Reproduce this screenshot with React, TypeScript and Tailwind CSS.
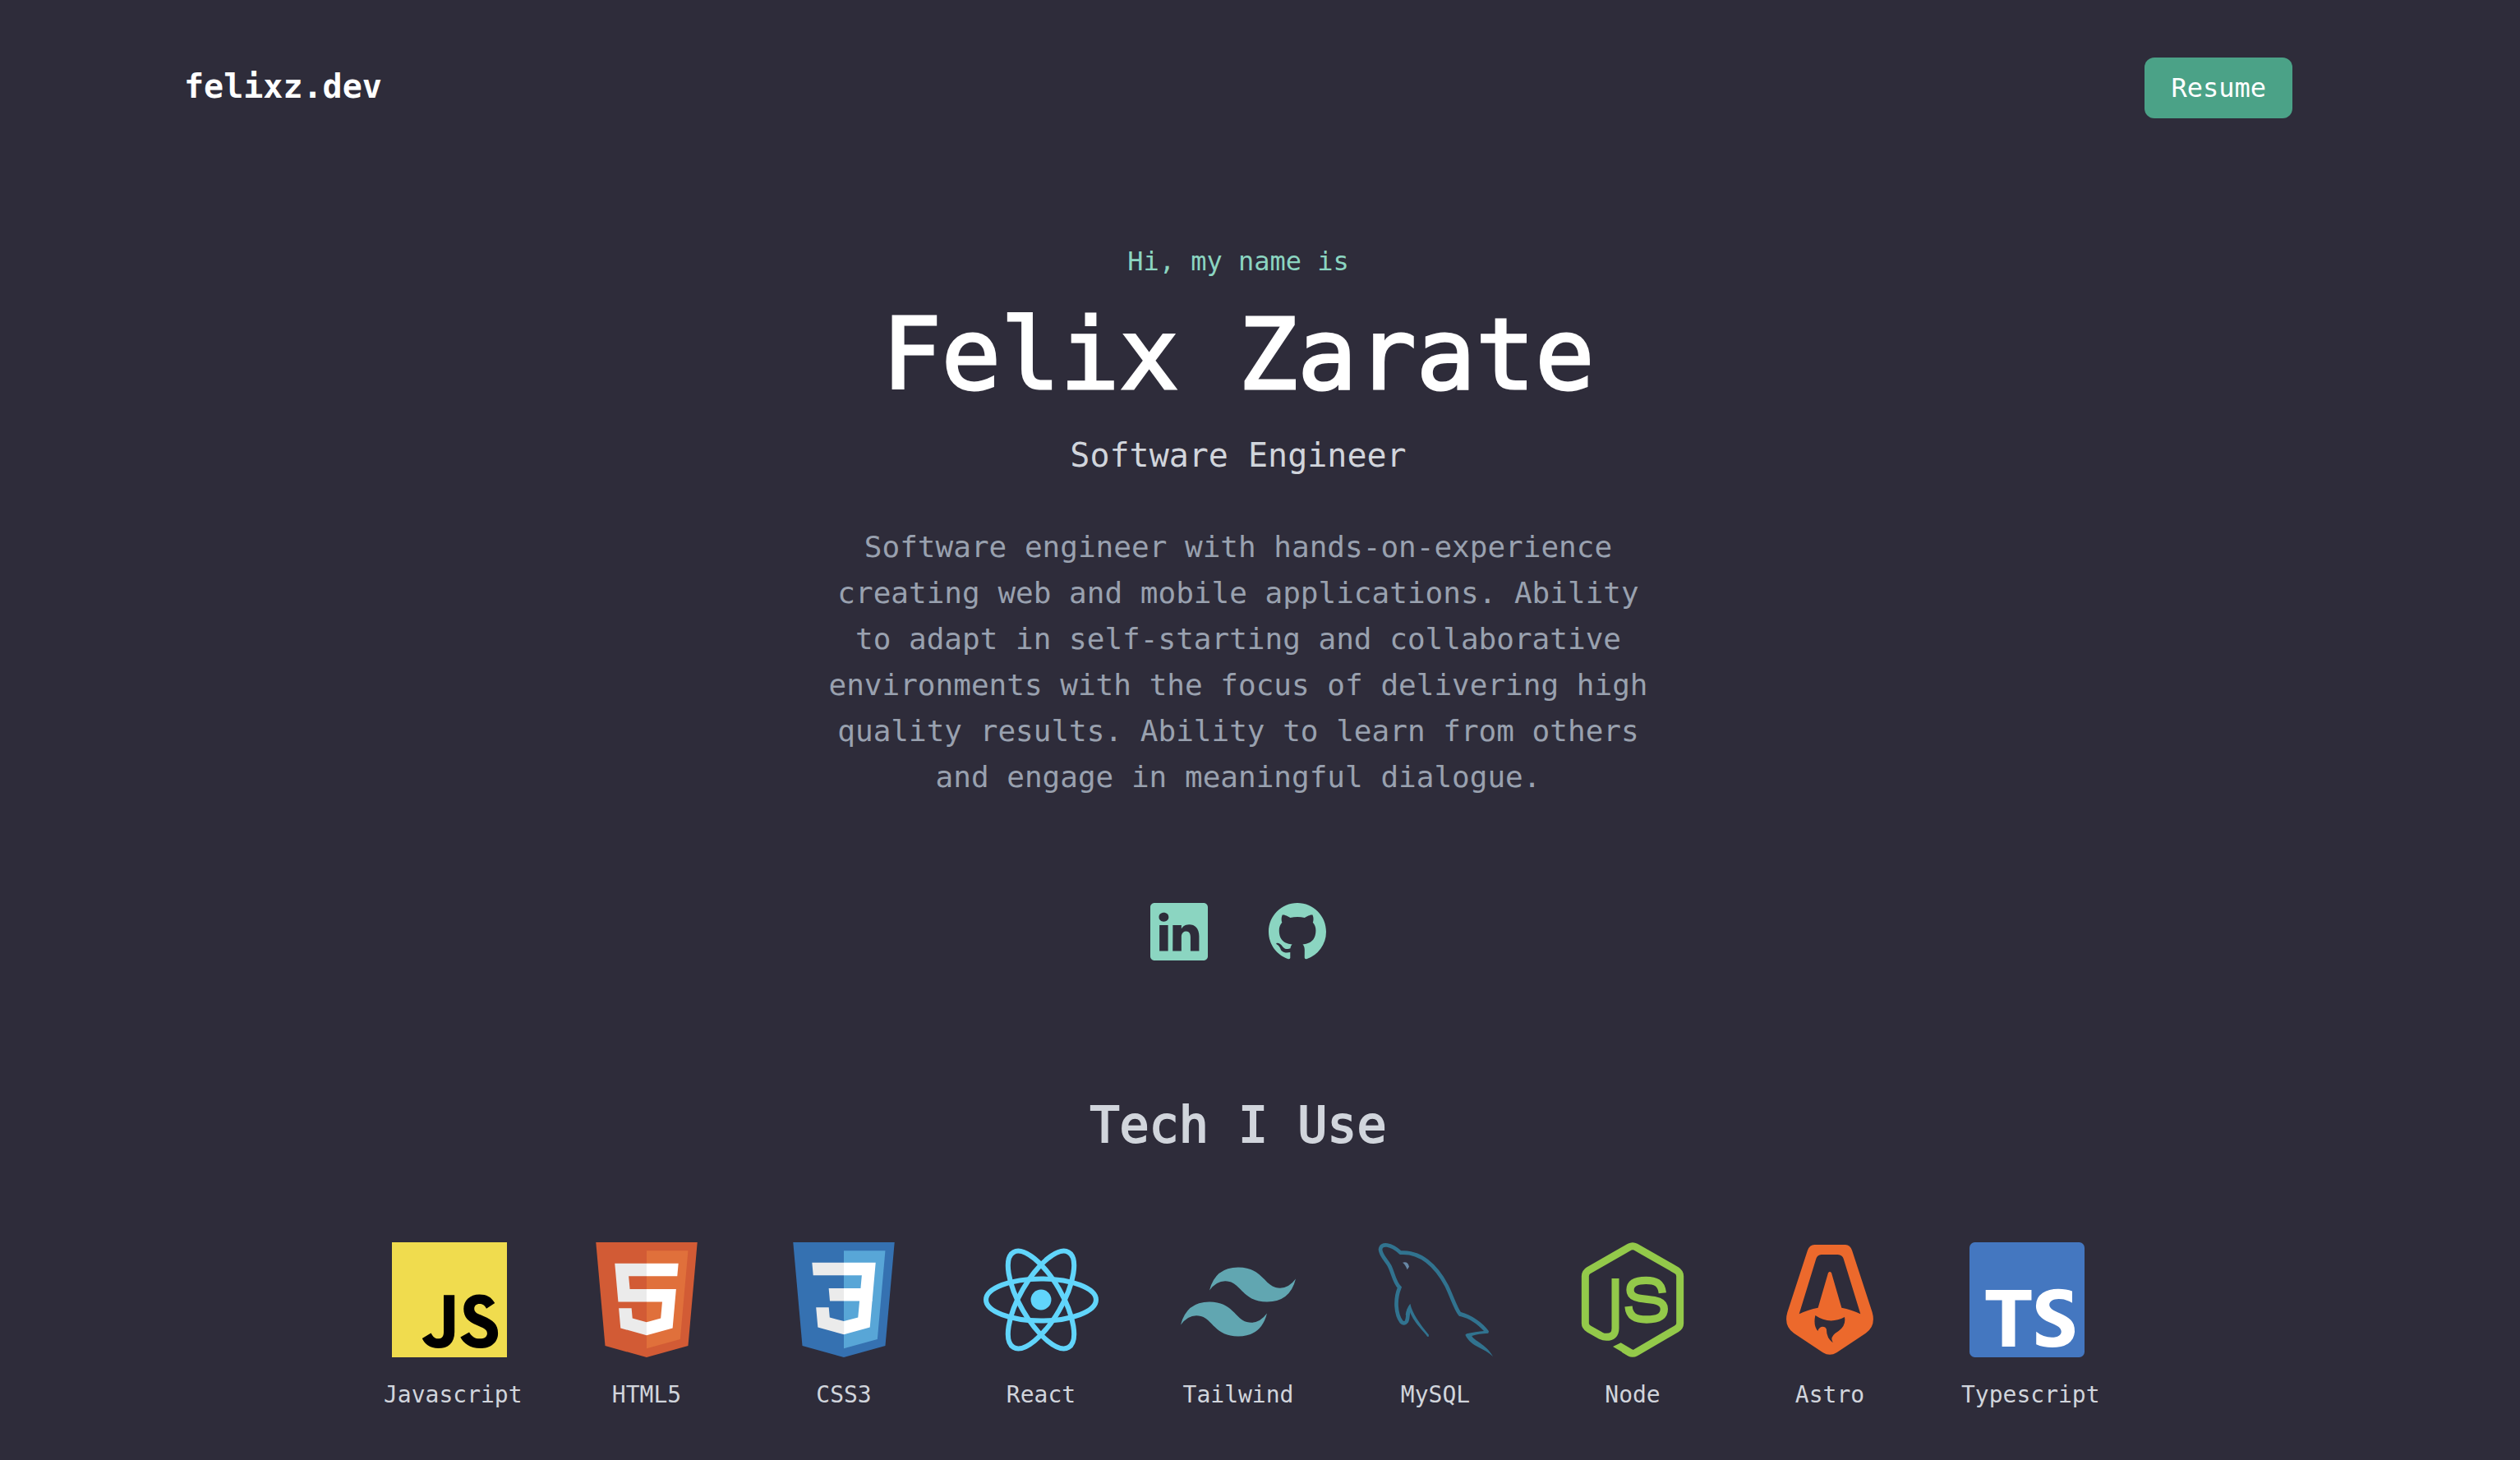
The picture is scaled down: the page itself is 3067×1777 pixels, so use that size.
import type { ReactNode } from "react";
import { BsGithub, BsLinkedin } from "react-icons/bs";

function JavascriptLogo() {
  return (
    <svg viewBox="0 0 256 256" className="size-full" aria-hidden="true">
      <path fill="#F0DC4E" d="M0 0h256v256H0z" />
      <path d="m67.312 213.932 19.59-11.856c3.78 6.701 7.218 12.371 15.465 12.371 7.905 0 12.89-3.092 12.89-15.12v-81.798h24.057v82.138c0 24.917-14.606 36.259-35.916 36.259-19.245 0-30.416-9.967-36.087-21.996M152.381 211.354l19.588-11.341c5.157 8.421 11.859 14.607 23.715 14.607 9.969 0 16.325-4.984 16.325-11.858 0-8.248-6.53-11.17-17.528-15.98l-6.013-2.579c-17.357-7.388-28.871-16.668-28.871-36.258 0-18.044 13.748-31.792 35.229-31.792 15.294 0 26.292 5.328 34.196 19.247L210.29 147.43c-4.125-7.389-8.591-10.31-15.465-10.31-7.046 0-11.514 4.468-11.514 10.31 0 7.217 4.468 10.139 14.778 14.608l6.014 2.577c20.45 8.765 31.963 17.7 31.963 37.804 0 21.654-17.012 33.51-39.867 33.51-22.339 0-36.774-10.654-43.819-24.574" />
    </svg>
  );
}

function HtmlLogo() {
  return (
    <svg viewBox="1.66 1.66 124.68 124.68" className="size-full" aria-hidden="true">
      <path fill="#D25B35" d="M19.037 113.876L9.032 1.661h109.936l-10.016 112.198-45.019 12.48z" />
      <path fill="#E0703B" d="M64 116.8l36.378-10.086 8.559-95.878H64z" />
      <path fill="#EBEBEB" d="M64 52.455H45.788L44.53 38.361H64V24.599H29.489l.33 3.692 3.382 37.927H64zm0 35.743l-.061.017-15.327-4.14-.979-10.975H33.816l1.928 21.609 28.193 7.826.063-.017z" />
      <path fill="#fff" d="M63.952 52.455v13.763h16.947l-1.597 17.849-15.35 4.143v14.319l28.215-7.82.207-2.325 3.234-36.233.335-3.696h-3.708zm0-27.856v13.762h33.244l.276-3.092.628-6.978.329-3.692z" />
    </svg>
  );
}

function CssLogo() {
  return (
    <svg viewBox="2 2 28 28" className="size-full" aria-hidden="true">
      <path fill="#3571B1" d="M5.902 27.201 3.656 2h24.688l-2.249 25.197L15.985 30Z" />
      <path fill="#58A6D7" d="m16 27.858 8.17-2.265 1.922-21.532H16Z" />
      <path fill="#fff" d="M16 13.191h4.09l.282-3.165H16V6.935h7.75l-.074.829-.759 8.518H16Z" />
      <path fill="#EBEBEB" d="m16.019 21.218-.014.004-3.442-.929-.22-2.465H9.24l.433 4.853 6.331 1.758.015-.004Z" />
      <path fill="#fff" d="m19.827 16.151-.372 4.139-3.447.93v3.216l6.336-1.756.047-.522.537-6.131Z" />
      <path fill="#EBEBEB" d="M16.011 6.935v3.091H8.545l-.062-.695-.141-1.567-.074-.829ZM16 13.191v3.091h-3.399l-.062-.695-.141-1.567-.074-.829Z" />
    </svg>
  );
}

function ReactLogo() {
  return (
    <svg viewBox="-11.5 -11.5 23 23" className="size-full" aria-hidden="true">
      <circle r="2.05" fill="#61D5FB" />
      <g fill="none" stroke="#61D5FB">
        <ellipse rx="11" ry="4.2" />
        <ellipse rx="11" ry="4.2" transform="rotate(60)" />
        <ellipse rx="11" ry="4.2" transform="rotate(120)" />
      </g>
    </svg>
  );
}

function TailwindLogo() {
  return (
    <svg viewBox="2 2 28 28" className="size-full" aria-hidden="true">
      <path
        fill="#61A6B1"
        d="M9,13.7q1.4-5.6,7-5.6c5.6,0,6.3,4.2,9.1,4.9q2.8.7,4.9-2.1-1.4,5.6-7,5.6c-5.6,0-6.3-4.2-9.1-4.9Q11.1,10.9,9,13.7ZM2,22.1q1.4-5.6,7-5.6c5.6,0,6.3,4.2,9.1,4.9q2.8.7,4.9-2.1-1.4,5.6-7,5.6c-5.6,0-6.3-4.2-9.1-4.9Q4.1,19.3,2,22.1Z"
      />
    </svg>
  );
}

function MysqlLogo() {
  return (
    <svg viewBox="771 66 420 420" className="size-full" aria-hidden="true">
      <path
        fill="none"
        stroke="#31738F"
        strokeWidth="14"
        d="M886 308 C878 325 882 346 875 356 Q867 366 857 357 C836 330 832 275 850 231 C830 212 825 172 812 150 C798 128 781 112 780 92 C783 67 818 72 854 104 C925 99 983 150 1022 225 C1040 262 1056 312 1071 329"
      />
      <path fill="#31738F" d="M889 290 C896 325 925 365 957 404 L956 411 L951 410 C948 400 905 365 888 321 L881 345 L872 330 Q876 306 889 290Z" />
      <path fill="#31738F" d="M1073 321 C1110 330 1155 360 1176 391 L1174 398 C1150 399 1130 402 1114 408 C1120 425 1165 436 1191 483 C1160 450 1112 450 1090 404 L1095 400 C1115 395 1140 391 1158 390 C1130 360 1100 342 1066 335Z" />
      <path fill="#6888A6" d="M861 140 Q880 134 885 155 L878 166 Q872 148 861 140Z" />
    </svg>
  );
}

function NodeLogo() {
  return (
    <svg viewBox="51 66 420 420" className="size-full" aria-hidden="true">
      <path
        fill="none"
        stroke="#93C94A"
        strokeWidth="27"
        d="M198 198 V380 Q198 412 165 412 Q155 412 145 407 L101 382 Q88 373 88 362 V190 Q88 176 101 168 L250 83 Q261 77 272 83 L421 168 Q434 176 434 190 V362 Q434 374 421 382 L272 469 Q261 475 250 469 L228 456"
      />
      <path fill="#93C94A" d="M189 447 L218 433 L261 458 L250 483Z" />
      <path
        fill="none"
        stroke="#93C94A"
        strokeWidth="28"
        d="M370 251 C366 214 345 205 310 205 C270 205 252 218 252 240 C252 296 376 252 376 310 C376 340 350 348 312 348 C270 348 249 336 246 300"
      />
    </svg>
  );
}

function AstroLogo() {
  return (
    <svg viewBox="771 66 420 420" className="size-full" aria-hidden="true">
      <path
        fill="#EC692C"
        fillRule="evenodd"
        d="M925 75 H1038 Q1055 76 1062 95 L1136 322 Q1150 372 1112 398 L1006 469 Q981 484 956 469 L850 398 Q812 372 826 322 L900 95 Q907 76 925 75Z M950 111 Q935 112 931 126 L869 328 Q903 311 938 305 L975 178 Q981 169 987 178 L1024 305 Q1059 311 1093 328 L1031 126 Q1027 112 1010 111Z M928 333 Q980 368 1035 339 Q1041 370 1013 390 Q988 405 988 420 L992 433 Q968 415 969 384 Q966 374 954 374 Q941 376 937 390 Q920 370 928 333Z"
      />
    </svg>
  );
}

function TypescriptLogo() {
  return (
    <svg viewBox="2 2 28 28" className="size-full" aria-hidden="true">
      <rect x="2" y="2" width="28" height="28" rx="1.312" fill="#4477C0" />
      <path
        fill="#fff"
        d="M18.245 23.759v3.068a6.492 6.492 0 0 0 1.764.575 11.56 11.56 0 0 0 2.146.192 9.968 9.968 0 0 0 2.088-.211 5.11 5.11 0 0 0 1.735-.7 3.542 3.542 0 0 0 1.181-1.266 4.469 4.469 0 0 0 .186-3.394 3.409 3.409 0 0 0-.717-1.117 5.236 5.236 0 0 0-1.123-.877 12.027 12.027 0 0 0-1.477-.734q-.6-.249-1.08-.484a5.5 5.5 0 0 1-.813-.479 2.089 2.089 0 0 1-.516-.518 1.091 1.091 0 0 1-.181-.618 1.039 1.039 0 0 1 .162-.571 1.4 1.4 0 0 1 .459-.436 2.439 2.439 0 0 1 .726-.283 4.211 4.211 0 0 1 .956-.1 5.942 5.942 0 0 1 .808.058 6.292 6.292 0 0 1 .856.177 5.994 5.994 0 0 1 .836.3 4.657 4.657 0 0 1 .751.422V13.9a7.509 7.509 0 0 0-1.525-.4 12.426 12.426 0 0 0-1.9-.129 8.767 8.767 0 0 0-2.064.235 5.239 5.239 0 0 0-1.716.733 3.655 3.655 0 0 0-1.171 1.271 3.731 3.731 0 0 0-.431 1.845 3.588 3.588 0 0 0 .789 2.34 6 6 0 0 0 2.395 1.639q.63.26 1.175.509a6.458 6.458 0 0 1 .942.517 2.463 2.463 0 0 1 .626.585 1.2 1.2 0 0 1 .23.719 1.1 1.1 0 0 1-.144.552 1.269 1.269 0 0 1-.435.441 2.381 2.381 0 0 1-.726.292 4.377 4.377 0 0 1-1.018.105 5.773 5.773 0 0 1-1.969-.35 5.874 5.874 0 0 1-1.805-1.045Zm-5.154-7.638h4v-2.527H5.938v2.527H9.92v11.254h3.171Z"
      />
    </svg>
  );
}

const technologies: { name: string; logo: ReactNode }[] = [
  { name: "Javascript", logo: <JavascriptLogo /> },
  { name: "HTML5", logo: <HtmlLogo /> },
  { name: "CSS3", logo: <CssLogo /> },
  { name: "React", logo: <ReactLogo /> },
  { name: "Tailwind", logo: <TailwindLogo /> },
  { name: "MySQL", logo: <MysqlLogo /> },
  { name: "Node", logo: <NodeLogo /> },
  { name: "Astro", logo: <AstroLogo /> },
  { name: "Typescript", logo: <TypescriptLogo /> },
];

export default function App() {
  return (
    <div className="min-h-screen bg-[#2E2C3A] pr-[53px] pb-12 font-['DejaVu_Sans_Mono','Liberation_Mono',monospace] text-white">
      <header className="flex items-center justify-between px-56 pt-[70px]">
        <a href="#" className="pb-1 text-[40px] leading-14 font-bold">
          felixz.dev
        </a>
        <a href="#resume" className="rounded-xl bg-[#4BA287] px-8 py-[13px] text-[32px] leading-12">
          Resume
        </a>
      </header>

      <main>
        <section className="flex flex-col items-center pt-[150px] text-center">
          <p className="text-[32px] leading-12 text-[#8BD5C1]">Hi, my name is</p>
          <h1 className="mt-[30px] text-[120px] leading-none [-webkit-text-stroke:3px_currentColor]">Felix Zarate</h1>
          <p className="mt-[34px] text-[40px] leading-14 text-gray-300">Software Engineer</p>
          <p className="mt-14 max-w-5xl text-[36px] leading-14 text-gray-400">
            Software engineer with hands-on-experience creating web and mobile applications. Ability to adapt in
            self-starting and collaborative environments with the focus of delivering high quality results. Ability to
            learn from others and engage in meaningful dialogue.
          </p>
          <div className="mt-[125px] flex gap-[74px] text-[#8BD5C1]">
            <a href="#linkedin" aria-label="LinkedIn">
              <BsLinkedin className="size-[70px]" />
            </a>
            <a href="#github" aria-label="GitHub">
              <BsGithub className="size-[70px]" />
            </a>
          </div>
        </section>

        <section className="flex flex-col items-center pt-[164px]">
          <h2 className="text-[60px] leading-[72px] text-gray-300 [-webkit-text-stroke:2px_currentColor]">Tech I Use</h2>
          <ul className="mt-[107px] flex flex-wrap justify-center gap-20">
            {technologies.map(({ name, logo }) => (
              <li key={name} className="flex w-40 flex-col gap-[26px]">
                <div className="size-[140px] self-center">{logo}</div>
                <p className="text-center text-[28px] leading-10 text-gray-300">{name}</p>
              </li>
            ))}
          </ul>
        </section>
      </main>
    </div>
  );
}
